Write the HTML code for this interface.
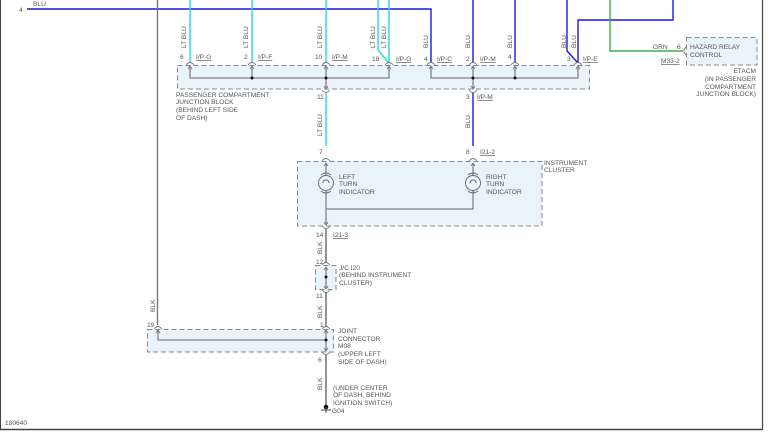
<!DOCTYPE html>
<html><head><meta charset="utf-8"><style>
html,body{margin:0;padding:0;background:#fff;}
svg{display:block;font-family:"Liberation Sans",sans-serif;}
text{font-size:6.6px;fill:#555;}
.u{text-decoration:underline;}
</style></head><body>
<svg width="769" height="432" viewBox="0 0 769 432" xmlns="http://www.w3.org/2000/svg">
<rect width="769" height="432" fill="#fff"/>
<!-- frame -->
<line x1="0.5" y1="0" x2="0.5" y2="430" stroke="#444" stroke-width="1"/>
<line x1="762.5" y1="0" x2="762.5" y2="430" stroke="#444" stroke-width="1.2"/>
<line x1="0" y1="429.5" x2="763" y2="429.5" stroke="#444" stroke-width="1.5"/>

<!-- boxes -->
<g fill="#e8f3fa" stroke="#888" stroke-width="1" stroke-dasharray="5,3">
<rect x="177.5" y="65.5" width="412" height="23.5"/>
<rect x="297.5" y="161.5" width="244.5" height="64.5"/>
<rect x="315.5" y="265.5" width="20.5" height="24"/>
<rect x="147.5" y="329.5" width="186" height="22.5"/>
<rect x="686.5" y="37.5" width="70.5" height="27.5"/>
</g>

<!-- wires -->
<g fill="none" stroke-width="1.4">
<polyline points="27,9 431,9 431,62" stroke="#1a1ae6"/>
<line x1="190" y1="0" x2="190" y2="62" stroke="#22d8e8"/>
<line x1="252" y1="0" x2="252" y2="62" stroke="#22d8e8"/>
<line x1="326" y1="0" x2="326" y2="62" stroke="#22d8e8"/>
<polyline points="378,0 378,50 388,62" stroke="#22d8e8"/>
<line x1="389" y1="0" x2="389" y2="62" stroke="#22d8e8"/>
<line x1="473" y1="0" x2="473" y2="62" stroke="#1a1ae6"/>
<line x1="515" y1="0" x2="515" y2="62" stroke="#1a1ae6"/>
<polyline points="567,0 567,51 577,62" stroke="#1a1ae6"/>
<polyline points="578,62 578,20 673,20 673,0" stroke="#1a1ae6"/>
<polyline points="610,0 610,51 683,51" stroke="#3cb43c"/>
<line x1="326" y1="92" x2="326" y2="146" stroke="#22d8e8"/>
<line x1="473" y1="92" x2="473" y2="146" stroke="#1a1ae6"/>
<line x1="157.5" y1="0" x2="157.5" y2="325" stroke="#777"/>
<line x1="326" y1="229" x2="326" y2="262" stroke="#666"/>
<line x1="326" y1="292" x2="326" y2="326" stroke="#666"/>
<line x1="326" y1="355" x2="326" y2="407" stroke="#666"/>
</g>
<!-- internal lines -->
<g fill="none" stroke="#666" stroke-width="1">
<polyline points="190,67 190,78 389,78 389,67"/>
<line x1="252" y1="67" x2="252" y2="78"/>
<line x1="326" y1="67" x2="326" y2="88"/>
<polyline points="431,67 431,78 578,78 578,67"/>
<line x1="473" y1="67" x2="473" y2="88"/>
<line x1="515" y1="67" x2="515" y2="78"/>
<line x1="326" y1="163" x2="326" y2="175"/>
<line x1="473" y1="163" x2="473" y2="175"/>
<polyline points="326,191 326,224"/>
<polyline points="326,209 473,209 473,191"/>
<line x1="326" y1="267" x2="326" y2="288"/>
<polyline points="158,331 158,340 326,340"/>
<line x1="326" y1="331" x2="326" y2="350"/>
</g>
<!-- dots -->
<g fill="#111">
<circle cx="252" cy="78" r="1.5"/><circle cx="326" cy="78" r="1.5"/>
<circle cx="473" cy="78" r="1.5"/><circle cx="515" cy="78" r="1.5"/>
<circle cx="326" cy="277" r="1.5"/><circle cx="326" cy="340" r="1.5"/>
<circle cx="326" cy="407" r="2.3"/>
</g>
<!-- ground -->
<line x1="321" y1="410" x2="331" y2="410" stroke="#444" stroke-width="1"/>
<line x1="326" y1="407" x2="326" y2="413" stroke="#444" stroke-width="1"/>
<!-- connector arcs (top, pointing up) -->
<g fill="none" stroke="#777" stroke-width="0.9">
<path d="M186,65 Q190,60 194,65M248,65 Q252,60 256,65M322,65 Q326,60 330,65M385,65 Q389,60 393,65M427,65 Q431,60 435,65M469,65 Q473,60 477,65M511,65 Q515,60 519,65M574,65 Q578,60 582,65"/>
<path d="M188,69 L190,66 L192,69M250,69 L252,66 L254,69M324,69 L326,66 L328,69M387,69 L389,66 L391,69M429,69 L431,66 L433,69M471,69 L473,66 L475,69M513,69 L515,66 L517,69M576,69 L578,66 L580,69"/>
<path d="M322,90 Q326,95 330,90M469,90 Q473,95 477,90M324,86 L326,89 L328,86M471,86 L473,89 L475,86"/>
<path d="M322,161 Q326,156 330,161M469,161 Q473,156 477,161M324,166 L326,163 L328,166M471,166 L473,163 L475,166"/>
<path d="M322,226 Q326,231 330,226M324,222 L326,225 L328,222"/>
<path d="M322,265 Q326,260 330,265M324,270 L326,267 L328,270M322,290 Q326,295 330,290M324,286 L326,289 L328,286"/>
<path d="M154,329 Q158,324 162,329M156,333 L158,330 L160,333M322,329 Q326,324 330,329M324,333 L326,330 L328,333M322,352 Q326,357 330,352M324,348 L326,351 L328,348"/>
<path d="M686,47 Q682,51 686,55"/>
</g>
<!-- bulbs -->
<g fill="none" stroke="#666" stroke-width="0.9">
<circle cx="326" cy="183" r="7.5"/><circle cx="473" cy="183" r="7.5"/>
<path d="M323,183 q0,-3 3,-3 q3,0 3,3 M470,183 q0,-3 3,-3 q3,0 3,3"/>
<path d="M321,175 Q326,171 331,175M468,175 Q473,171 478,175M321,191 Q326,195 331,191M468,191 Q473,195 478,191"/>
</g>

<!-- vertical wire labels -->
<g>
<text transform="translate(186,48) rotate(-90)">LT BLU</text>
<text transform="translate(248,48) rotate(-90)">LT BLU</text>
<text transform="translate(322,48) rotate(-90)">LT BLU</text>
<text transform="translate(375,48) rotate(-90)">LT BLU</text>
<text transform="translate(386,48) rotate(-90)">LT BLU</text>
<text transform="translate(428,48) rotate(-90)">BLU</text>
<text transform="translate(470,48) rotate(-90)">BLU</text>
<text transform="translate(512,48) rotate(-90)">BLU</text>
<text transform="translate(566,48) rotate(-90)">BLU</text>
<text transform="translate(576,48) rotate(-90)">BLU</text>
<text transform="translate(322,136) rotate(-90)">LT BLU</text>
<text transform="translate(470,128) rotate(-90)">BLU</text>
<text transform="translate(322,254) rotate(-90)">BLK</text>
<text transform="translate(322,318) rotate(-90)">BLK</text>
<text transform="translate(155,312) rotate(-90)">BLK</text>
<text transform="translate(322,390) rotate(-90)">BLK</text>
</g>
<!-- pin labels -->
<text x="33" y="6">BLU</text>
<text x="19" y="12">4</text>
<text x="180" y="59">6</text><text x="196" y="59" class="u">I/P-G</text>
<text x="244" y="59">2</text><text x="258" y="59" class="u">I/P-F</text>
<text x="315" y="59">10</text><text x="332" y="59" class="u">I/P-M</text>
<text x="372" y="61">18</text><text x="396" y="61" class="u">I/P-G</text>
<text x="424" y="61">4</text><text x="437" y="61" class="u">I/P-C</text>
<text x="466" y="61">2</text><text x="480" y="61" class="u">I/P-M</text>
<text x="508" y="59">4</text>
<text x="567" y="61">3</text><text x="583" y="61" class="u">I/P-E</text>
<text x="317" y="99">11</text>
<text x="466" y="99">3</text><text x="477" y="99" class="u">I/P-M</text>
<text x="319" y="154">7</text>
<text x="466" y="154">8</text><text x="480" y="154" class="u">I21-2</text>
<text x="316" y="237">14</text><text x="333" y="237" class="u">I21-3</text>
<text x="316" y="264">12</text>
<text x="316" y="298">11</text>
<text x="320" y="327">1</text>
<text x="147" y="327">19</text>
<text x="318" y="362">6</text>
<text x="653" y="49">GRN</text><text x="677" y="49">6</text>
<text x="661" y="63" class="u">M33-2</text>
<text x="690" y="49">HAZARD RELAY</text>
<text x="690" y="57">CONTROL</text>
<text x="756" y="73" text-anchor="end">ETACM</text>
<text x="756" y="81" text-anchor="end">(IN PASSENGER</text>
<text x="756" y="89" text-anchor="end">COMPARTMENT</text>
<text x="756" y="96" text-anchor="end">JUNCTION BLOCK)</text>
<text x="176" y="97">PASSENGER COMPARTMENT</text>
<text x="176" y="104">JUNCTION BLOCK</text>
<text x="176" y="112">(BEHIND LEFT SIDE</text>
<text x="176" y="120">OF DASH)</text>
<text x="544" y="165">INSTRUMENT</text>
<text x="544" y="172">CLUSTER</text>
<text x="339" y="179">LEFT</text><text x="339" y="186">TURN</text><text x="339" y="194">INDICATOR</text>
<text x="486" y="179">RIGHT</text><text x="486" y="186">TURN</text><text x="486" y="194">INDICATOR</text>
<text x="339" y="270">J/C I20</text>
<text x="339" y="277">(BEHIND INSTRUMENT</text>
<text x="339" y="285">CLUSTER)</text>
<text x="338" y="333">JOINT</text>
<text x="338" y="341">CONNECTOR</text>
<text x="338" y="348">M08</text>
<text x="338" y="356">(UPPER LEFT</text>
<text x="338" y="364">SIDE OF DASH)</text>
<text x="333" y="390">(UNDER CENTER</text>
<text x="333" y="397">OF DASH, BEHIND</text>
<text x="333" y="405">IGNITION SWITCH)</text>
<text x="332" y="413">G04</text>
<text x="5" y="425">180640</text>
</svg>
</body></html>
